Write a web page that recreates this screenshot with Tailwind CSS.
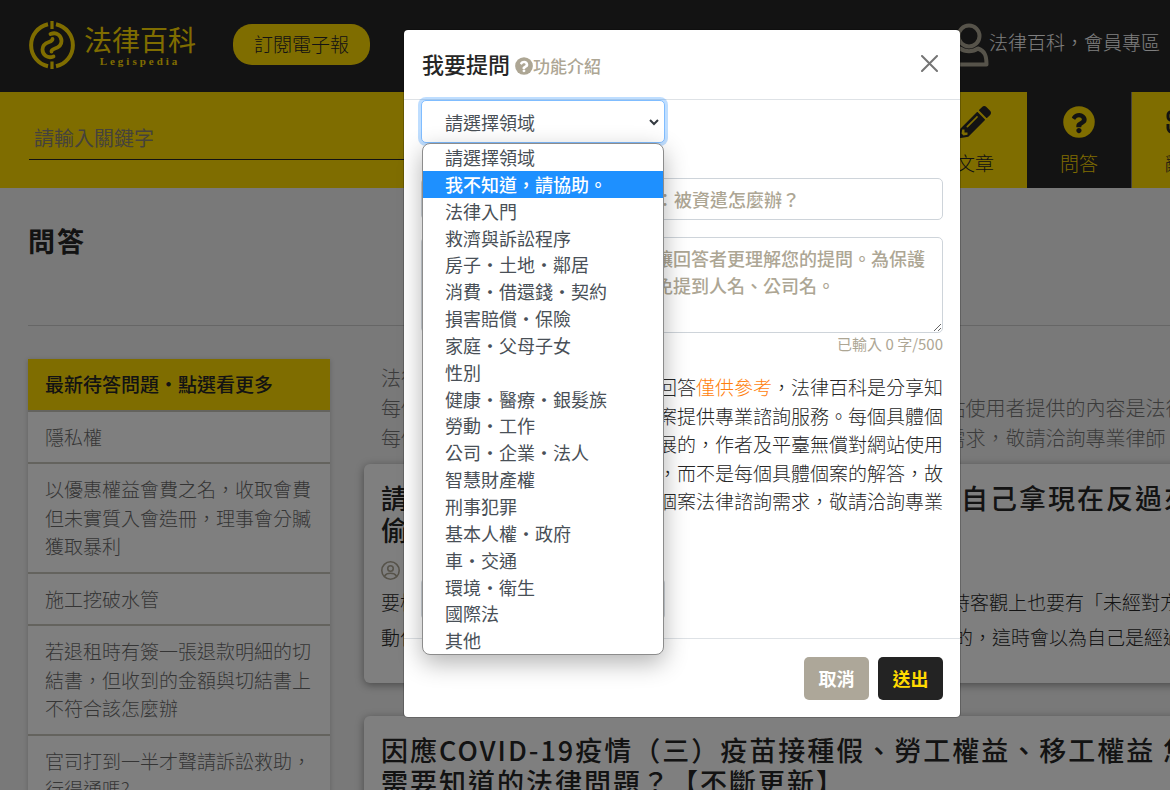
<!DOCTYPE html>
<html lang="zh-Hant">
<head>
<meta charset="utf-8">
<meta name="viewport" content="width=device-width, initial-scale=1">
<title>問答 - 法律百科 Legispedia</title>
<script src="https://cdn.jsdelivr.net/npm/@tailwindcss/browser@4"></script>
</head>
<body class="h-screen overflow-hidden bg-[#f2f2f2] font-['Noto_Sans_CJK_TC',sans-serif] text-[#262626]">
<div class="relative w-[calc(100%+194px)]">

  <!-- Page -->
  <div class="h-screen overflow-hidden">
    <header class="flex h-[92px] items-center bg-[#262626] pb-[3px] pl-7 pr-[204px]">
      <a href="#" class="flex items-center gap-2 text-[#ffda00]" aria-label="法律百科 Legispedia">
        <svg class="size-12" viewBox="0 0 48 48" fill="none" stroke="currentColor" stroke-width="4">
          <path d="M20 3.300A21.500 21.500 0 0 0 20 45.300M28 3.300A21.500 21.500 0 0 1 28 45.300"/>
          <path d="M24 0v8M24 40.500v8" stroke-width="3.200"/>
          <g stroke-width="3.800" stroke-linecap="round">
            <path d="M22.500 13c6.500-2.500 11 2 11 7c0 5-3.500 6.500-6.500 7.500c-2.500.8-3.500 1.500-3.500 3"/>
            <path d="M25.500 35.500c-6.500 2.500-11-2-11-7c0-5 3.500-6.500 6.500-7.500c2.500-.8 3.500-1.500 3.500-3"/>
          </g>
        </svg>
        <span class="flex flex-col items-center">
          <span class="text-[28px] font-normal leading-8">法律百科</span>
          <span class="font-['Liberation_Serif',serif] text-[11px] font-bold leading-3 tracking-[3px]">Legispedia</span>
        </span>
      </a>
      <button type="button" class="ml-[37px] h-[41px] rounded-[19px] bg-[#ffda00] px-[21px] text-[19px] font-light text-[#262626]">訂閱電子報</button>
      <a href="#" class="ml-auto flex items-center text-[19px] font-light text-white">
        <svg class="h-11 w-10 text-[#ada694]" viewBox="0 0 40 44" fill="none" stroke="currentColor" stroke-width="4">
          <circle cx="20" cy="13" r="10.500"/>
          <path d="M11 25.500C4 28 2.500 33 2.500 41.500h35C37.500 33 36 28 29 25.500C24 29 16 29 11 25.500z" stroke-linejoin="round"/>
        </svg>
        <span class="-mt-1">法律百科，會員專區</span>
      </a>
    </header>

    <div class="flex h-24 bg-[#ffda00] pl-[29px] pr-[25px] text-[#262626]">
      <form class="mr-8 flex-1">
        <input type="text" aria-label="請輸入關鍵字" placeholder="請輸入關鍵字" class="mt-6 h-11 w-full border-b border-[#262626] bg-transparent px-[5px] text-[20px] font-normal outline-none placeholder:text-[#8a8578]">
      </form>
      <nav class="flex">
        <a href="#" class="flex w-[104px] flex-col items-center gap-[11px] pt-[14px] text-[19px] font-light leading-7">
          <svg class="size-8" viewBox="0 0 512 512" fill="currentColor"><path d="M497.900 142.100l-46.100 46.100c-4.700 4.700-12.300 4.700-17 0l-111-111c-4.700-4.700-4.700-12.300 0-17l46.100-46.100c18.700-18.700 49.100-18.700 67.900 0l60.100 60.100c18.800 18.700 18.800 49.100 0 67.900zM284.200 99.800L21.600 362.400.4 483.900c-2.900 16.400 11.400 30.600 27.800 27.800l121.500-21.300 262.600-262.600c4.700-4.700 4.700-12.300 0-17l-111-111c-4.800-4.700-12.400-4.700-17.100 0zM124.100 339.900c-5.500-5.500-5.500-14.300 0-19.800l154-154c5.500-5.500 14.300-5.500 19.800 0s5.500 14.300 0 19.800l-154 154c-5.500 5.500-14.300 5.500-19.800 0zM88 424h48v36.300l-64.500 11.300-31.100-31.100L51.700 376H88v48z"/></svg>
          <span>文章</span>
        </a>
        <a href="#" aria-current="page" class="flex w-[104px] flex-col items-center gap-[11px] bg-[#262626] pt-[14px] text-[19px] font-light leading-7 text-[#ffda00]">
          <svg class="size-8" viewBox="0 0 512 512"><circle cx="256" cy="256" r="252" fill="currentColor"/><path fill="#262626" d="M262.700 110c-55 0-90 23-118 64-4 5-3 12 3 16l35 27c5 4 12 3 16-2 18-23 30-36 57-36 21 0 46 13 46 33 0 15-12 23-33 34-24 14-56 30-56 72v12c0 6 5 11 11 11h59c6 0 11-5 11-11v-4c0-29 85-30 85-109 0-59-61-107-116-107zM255 352c-23 0-42 18-42 41s19 42 42 42 42-19 42-42-19-41-42-41z"/></svg>
          <span>問答</span>
        </a>
        <a href="#" class="flex w-[104px] flex-col items-center gap-[11px] border-l border-[#8a8578] pt-[14px] text-[19px] font-light leading-7">
          <svg class="h-8 w-9" viewBox="0 0 36 32" fill="none" stroke="currentColor" stroke-width="3"><rect x="2" y="6" width="14" height="8" rx="3"/><path d="M2 18v4a4 4 0 0 0 4 4h10M22 6h12M22 16h12M22 26h12"/></svg>
          <span>辭典</span>
        </a>
        <a href="#" class="flex w-[104px] flex-col items-center gap-[11px] border-l border-[#8a8578] pt-[14px] text-[19px] font-light leading-7">
          <svg class="size-8" viewBox="0 0 32 32" fill="none" stroke="currentColor" stroke-width="3"><rect x="3" y="5" width="26" height="22" rx="3"/><path d="M13 11l8 5-8 5z"/></svg>
          <span>影音</span>
        </a>
      </nav>
    </div>

    <main class="px-[28px]">
      <h1 class="h-[138px] border-b border-[#cccccc] pt-8 text-[27px] font-bold leading-[42px] tracking-[2px]">問答</h1>
      <div class="mt-[33px] flex gap-[34px]">
        <aside class="w-[302px] shrink-0 bg-white text-[19px] font-light leading-normal text-[#6b6b6b] shadow-[0_1px_5px_rgba(0,0,0,0.2)]">
          <h2 class="border-b-2 border-[#c9c6bd] bg-[#ffda00] px-[17px] py-[11px] font-medium text-[#262626]">最新待答問題・點選看更多</h2>
          <ul class="divide-y-2 divide-[#c9c6bd]">
            <li><a href="#" class="block px-[17px] py-[11px]">隱私權</a></li>
            <li><a href="#" class="block px-[17px] py-[11px]">以優惠權益會費之名，收取會費但未實質入會造冊，理事會分贓獲取暴利</a></li>
            <li><a href="#" class="block px-[17px] py-[11px]">施工挖破水管</a></li>
            <li><a href="#" class="block px-[17px] py-[11px]">若退租時有簽一張退款明細的切結書，但收到的金額與切結書上不符合該怎麼辦</a></li>
            <li><a href="#" class="block px-[17px] py-[11px]">官司打到一半才聲請訴訟救助，行得通嗎?</a></li>
          </ul>
        </aside>
        <div class="min-w-0 flex-1">
          <p class="h-[105px] whitespace-nowrap px-[17px] pt-1 text-[20px] font-light leading-[30px] text-[#777777]">法律百科是分享知識的平臺。<br>每個問題與回答都是由作者撰寫，目的是協助民眾理解， 並為網站使用者提供的內容是法律<br>每個具體個案的情況都不相同， 如果您有個案的法律諮詢或服務需求，敬請洽詢專業律師</p>
          <article class="h-[219px] whitespace-nowrap rounded-md bg-white px-[17px] pt-[18px] shadow-[0_2px_8px_rgba(0,0,0,0.4)]">
            <h2 class="text-[27px] font-medium leading-8 tracking-[2px]">請問朋友先前說可以拿的東西，結果我就真的自己拿現在反過來說我<br>偷竊這樣會成立嗎？</h2>
            <svg class="mt-[15px] size-[19px] text-[#ada694]" viewBox="0 0 24 24" fill="none" stroke="currentColor" stroke-width="2"><circle cx="12" cy="12" r="11"/><circle cx="12" cy="9.500" r="3.500"/><path d="M4.500 19c2-3.500 5-3.500 7.500-3.500s5.500 0 7.500 3.500"/></svg>
            <p class="mt-1 text-[19px] font-light leading-[35px]">要構成竊盜罪，除了主觀上有不法所有的意圖以外，行為人拿取物品時客觀上也要有「未經對方同意<br>動作」， 如果行為人以為自己可以使用或是取走這個東西， 並 非故意的，這時會以為自己是經過同意</p>
          </article>
          <article class="mt-[33px] h-[219px] whitespace-nowrap rounded-md bg-white px-[17px] pt-[18px] shadow-[0_2px_8px_rgba(0,0,0,0.4)]">
            <h2 class="text-[27px] font-medium leading-8 tracking-[2px]">因應COVID-19疫情（三）疫苗接種假、勞工權益、移工權益 您<br>需要知道的法律問題？【不斷更新】</h2>
          </article>
        </div>
      </div>
    </main>
  </div>

  <!-- Dialog -->
  <div class="absolute inset-0 flex items-start justify-center bg-black/50 pt-[29px]">
    <section role="dialog" aria-labelledby="ask-title" class="w-[558px] rounded-[5px] border border-black/20 bg-white bg-clip-padding">
      <div class="flex h-[70px] items-center border-b border-[#dee2e6] px-[18px] pb-[3px]">
        <h2 id="ask-title" class="text-[22px] font-medium leading-8">我要提問</h2>
        <a href="#" class="ml-[5px] mt-[5px] flex items-center text-[17px] font-medium text-[#ada694]">
          <svg class="size-[18px]" viewBox="0 0 512 512"><circle cx="256" cy="256" r="252" fill="currentColor"/><path fill="#fff" d="M262.700 110c-55 0-90 23-118 64-4 5-3 12 3 16l35 27c5 4 12 3 16-2 18-23 30-36 57-36 21 0 46 13 46 33 0 15-12 23-33 34-24 14-56 30-56 72v12c0 6 5 11 11 11h59c6 0 11-5 11-11v-4c0-29 85-30 85-109 0-59-61-107-116-107zM255 352c-23 0-42 18-42 41s19 42 42 42 42-19 42-42-19-41-42-41z"/></svg>
          <span>功能介紹</span>
        </a>
        <button type="button" aria-label="關閉" class="ml-auto mr-1 text-[#757575]">
          <svg class="size-[17px]" viewBox="0 0 17 17" fill="none" stroke="currentColor" stroke-width="2" stroke-linecap="round"><path d="M1 1l15 15M16 1L1 16"/></svg>
        </button>
      </div>

      <form id="ask-form" class="px-[17px]">
        <div class="relative w-[244px]">
          <select aria-label="領域" class="block h-[43px] w-full appearance-none rounded-[5px] border border-[#80bdff] bg-white px-[23px] pt-px text-[18px] font-normal text-[#495057] shadow-[0_0_0_3px_rgba(0,123,255,0.25)] outline-none">
            <option>請選擇領域</option><option>我不知道，請協助。</option><option>法律入門</option><option>救濟與訴訟程序</option><option>房子・土地・鄰居</option><option>消費・借還錢・契約</option><option>損害賠償・保險</option><option>家庭・父母子女</option><option>性別</option><option>健康・醫療・銀髮族</option><option>勞動・工作</option><option>公司・企業・法人</option><option>智慧財產權</option><option>刑事犯罪</option><option>基本人權・政府</option><option>車・交通</option><option>環境・衛生</option><option>國際法</option><option>其他</option>
          </select>
          <svg class="pointer-events-none absolute right-[6px] top-[19px] h-[7px] w-[10px]" viewBox="0 0 10 7" fill="none" stroke="#343a40" stroke-width="2"><path d="M1 1l4 4 4-4"/></svg>
          <!-- Open option list -->
          <ul role="listbox" aria-label="領域選項" class="absolute left-px top-[43px] z-10 flex h-[512px] w-[242px] flex-col overflow-hidden rounded-[8px] border border-[#8c8c8c] bg-white text-[18px] font-normal leading-[26px] text-[#495057] shadow-[0_8px_24px_rgba(0,0,0,0.3)]">
            <li role="option" class="min-h-0 flex-1 px-[22px]">請選擇領域</li>
            <li role="option" aria-selected="true" class="min-h-0 flex-1 bg-[#1e90ff] px-[22px] font-medium text-white">我不知道，請協助。</li>
            <li role="option" class="min-h-0 flex-1 px-[22px]">法律入門</li>
            <li role="option" class="min-h-0 flex-1 px-[22px]">救濟與訴訟程序</li>
            <li role="option" class="min-h-0 flex-1 px-[22px]">房子・土地・鄰居</li>
            <li role="option" class="min-h-0 flex-1 px-[22px]">消費・借還錢・契約</li>
            <li role="option" class="min-h-0 flex-1 px-[22px]">損害賠償・保險</li>
            <li role="option" class="min-h-0 flex-1 px-[22px]">家庭・父母子女</li>
            <li role="option" class="min-h-0 flex-1 px-[22px]">性別</li>
            <li role="option" class="min-h-0 flex-1 px-[22px]">健康・醫療・銀髮族</li>
            <li role="option" class="min-h-0 flex-1 px-[22px]">勞動・工作</li>
            <li role="option" class="min-h-0 flex-1 px-[22px]">公司・企業・法人</li>
            <li role="option" class="min-h-0 flex-1 px-[22px]">智慧財產權</li>
            <li role="option" class="min-h-0 flex-1 px-[22px]">刑事犯罪</li>
            <li role="option" class="min-h-0 flex-1 px-[22px]">基本人權・政府</li>
            <li role="option" class="min-h-0 flex-1 px-[22px]">車・交通</li>
            <li role="option" class="min-h-0 flex-1 px-[22px]">環境・衛生</li>
            <li role="option" class="min-h-0 flex-1 px-[22px]">國際法</li>
            <li role="option" class="min-h-0 flex-1 px-[22px]">其他</li>
          </ul>
        </div>
        <input type="text" aria-label="提問標題" placeholder="請簡短描述您的問題，例如：被資遣怎麼辦？" class="mt-[35px] block h-[42px] w-full rounded-[5px] border border-[#ced4da] px-[18px] text-[18px] font-medium placeholder:text-[#ada694]">
        <textarea aria-label="提問內容" placeholder="請詳細說明事情的經過，以讓回答者更理解您的提問。為保護您的隱私與權益，請務必避免提到人名、公司名。" class="mt-[17px] block h-24 w-full resize rounded-[5px] border border-[#ced4da] px-[17px] py-[7px] text-[18px] font-medium leading-[27px] placeholder:text-[#ada694]"></textarea>
        <p class="text-right text-[15px] font-normal leading-[22px] text-[#ada694]">已輸入 0 字/500</p>
        <p class="mt-[18px] whitespace-nowrap text-right text-[19px] font-light leading-normal">提醒您，網站上作者提供的回答<span class="text-[#ff7f0e]">僅供參考</span>，法律百科是分享知<br>識的平臺，不會針對您的個案提供專業諮詢服務。每個具體個<br>案的狀況都是持續變動與發展的，作者及平臺無償對網站使用<br>者提供的內容是法律的知識，而不是每個具體個案的解答，故<br>您如果有進一步需要處理的個案法律諮詢需求，敬請洽詢專業</p>
        <select aria-label="驗證方式" class="mt-[62px] block h-[42px] w-[244px] appearance-none rounded-[5px] border border-[#ced4da] bg-white px-[22px] text-[18px]"><option>請選擇</option></select>
      </form>

      <div class="mt-[18px] flex justify-end gap-[9px] border-t border-[#dee2e6] px-[17px] pb-[17px] pt-[18px] text-[18px] font-bold">
        <button type="button" class="h-[43px] w-[65px] rounded-[5px] bg-[#ada799] text-white">取消</button>
        <button type="submit" form="ask-form" class="h-[43px] w-[65px] rounded-[5px] bg-[#232323] text-[#ffda00]">送出</button>
      </div>
    </section>
  </div>
</div>
</body>
</html>
